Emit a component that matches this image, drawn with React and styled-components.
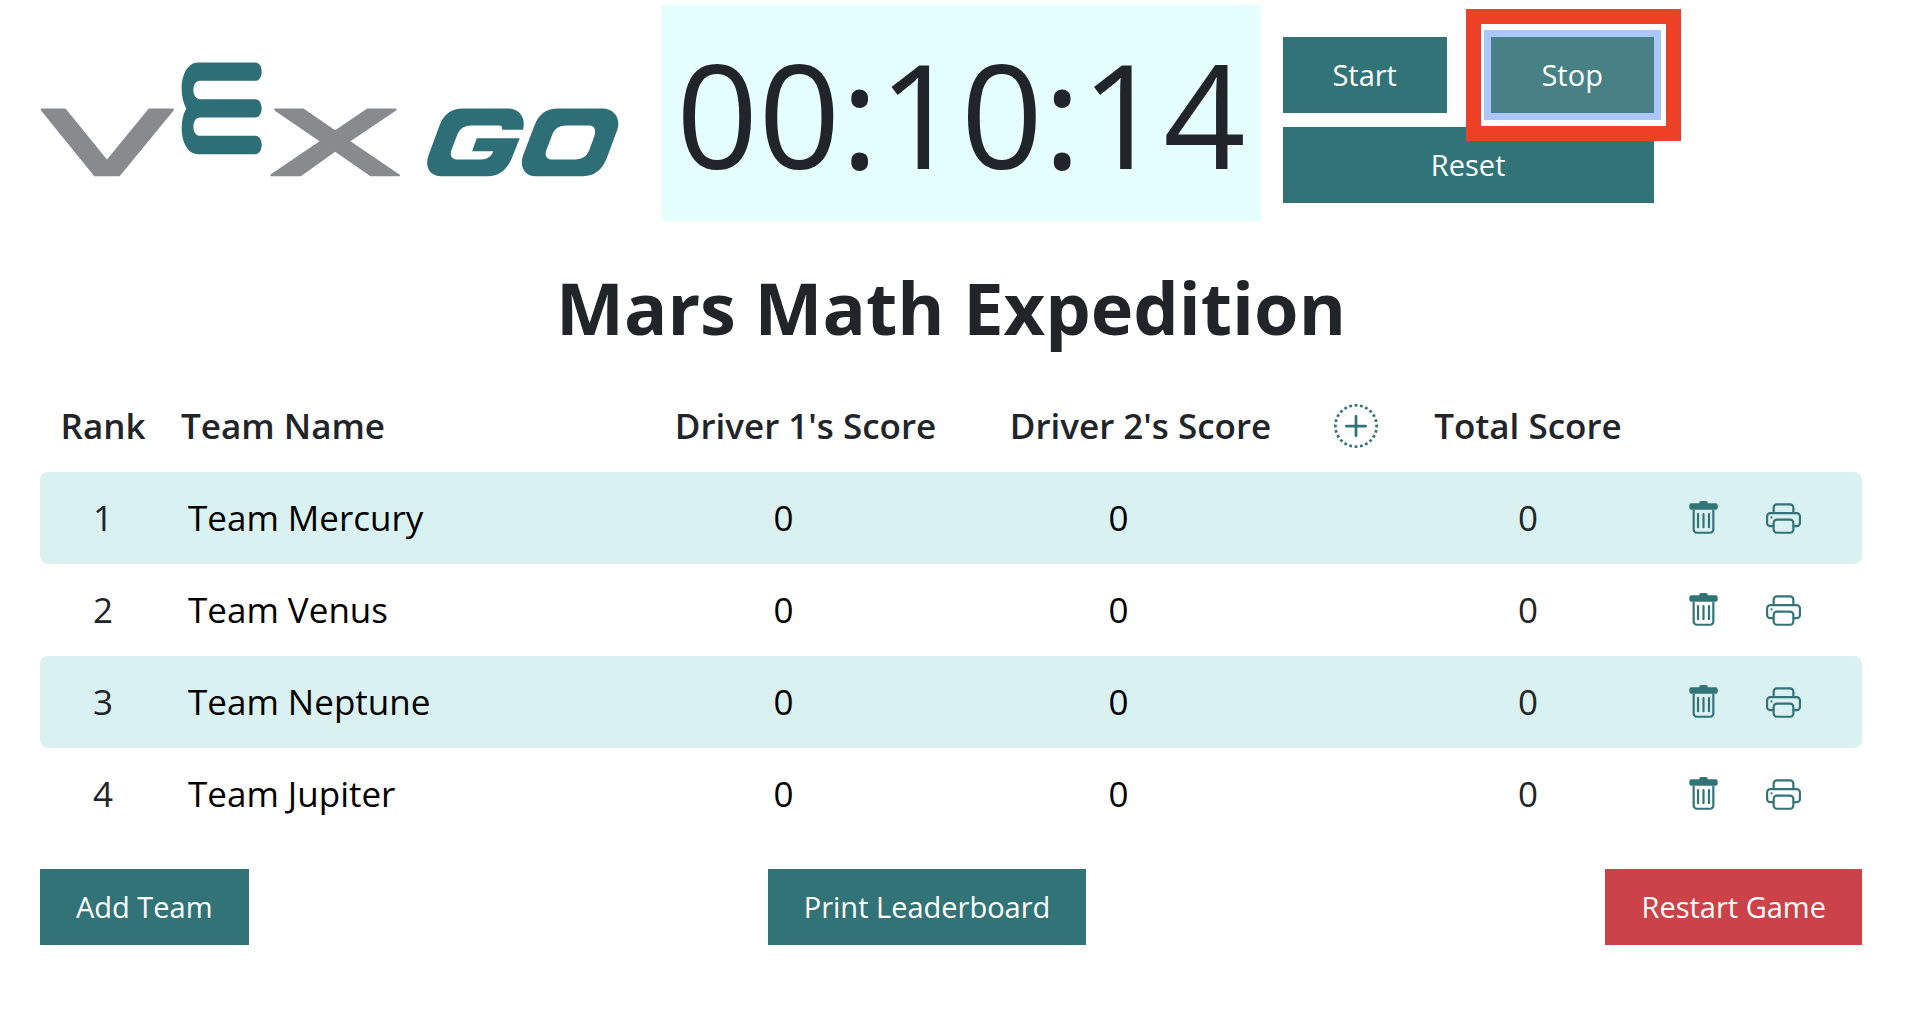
import React, { useState } from "react"
import styled, { createGlobalStyle } from "styled-components"
import { BsPlusCircleDotted, BsPrinter } from "react-icons/bs"

const GlobalStyle = createGlobalStyle`
  * {
    box-sizing: border-box;
  }

  body {
    margin: 0;
    background: #fff;
    color: #212529;
    font-family: "Open Sans", "Noto Sans", sans-serif;
  }
`

const Page = styled.main`
  padding: 5px 62px 40px 40px;
`

const Header = styled.header`
  display: flex;
  align-items: center;
`

const Logo = styled.svg`
  display: block;
  flex: none;
  width: 579px;
  height: 115px;
  margin-right: 43px;
  margin-top: 12px;
`

const Timer = styled.div`
  flex: none;
  padding: 0 15px 0 14px;
  margin-right: 22px;
  background: #e5ffff;
  font-size: 144px;
  line-height: 216px;
`

const Controls = styled.div`
  display: grid;
  grid-template-columns: 164px 163px;
  gap: 14px 44px;
  margin-top: 14px;
`

const Button = styled.button`
  width: 100%;
  padding: 17px 36px;
  border: 0;
  background: ${props => (props.$danger ? "#cb4249" : "#327378")};
  color: #fff;
  font-family: inherit;
  font-size: 29px;
  line-height: 42px;
  white-space: nowrap;
  cursor: pointer;
`

const ResetButton = styled(Button)`
  grid-column: 1 / -1;
`

const StopButton = styled(Button)`
  background: #488185;
  box-shadow: 0 0 0 7px #abc6fb;
`

const StopArea = styled.div`
  position: relative;
`

const Highlight = styled.span`
  position: absolute;
  inset: -28px -27px -28px -25px;
  border: 15px solid #ec4027;
  pointer-events: none;
`

const Title = styled.h1`
  margin: 32px 0 19px;
  font-size: 72px;
  font-weight: 700;
  line-height: 108px;
  text-align: center;
`

const Table = styled.table`
  width: 100%;
  table-layout: fixed;
  border-collapse: separate;
  border-spacing: 0;
  font-size: 35px;
  line-height: 52px;
`

const Col = styled.col`
  width: ${props => props.$width}px;
`

const HeadCell = styled.th`
  height: 92px;
  padding: ${props => (props.$left ? "0 0 0 15px" : "0")};
  font-weight: 600;
  text-align: ${props => (props.$left ? "left" : "center")};
  white-space: nowrap;
`

const Row = styled.tr`
  &:nth-child(odd) td {
    background: #d9f1f0;
  }
`

const Cell = styled.td`
  height: 92px;
  padding: 0;
  text-align: center;

  &:first-child {
    border-radius: 8px 0 0 8px;
  }

  &:last-child {
    border-radius: 0 8px 8px 0;
  }
`

const Field = styled.input`
  display: block;
  width: 100%;
  border: 0;
  background: transparent;
  color: #000;
  font: inherit;
`

const NameField = styled(Field)`
  padding: 0 0 0 22px;
`

const ScoreField = styled(Field)`
  padding: 0 44px 0 0;
  text-align: center;
`

const Actions = styled.div`
  display: flex;
  padding-left: 11px;
`

const IconButton = styled.button`
  display: flex;
  justify-content: center;
  align-items: center;
  width: ${props => (props.$wide ? "80px" : "100%")};
  padding: 0;
  border: 0;
  background: transparent;
  color: #327378;
  cursor: pointer;
`

const Footer = styled.footer`
  display: flex;
  justify-content: space-between;
  margin-top: 29px;

  ${Button} {
    width: auto;
  }
`

const VexGoLogo = () => (
  <Logo viewBox="30 38 1738 344" role="img" aria-label="VEX GO">
    <g fill="#898a8e">
      <path d="M36 177H104Q107 177 109 180L231 330 354 180Q356 177 360 177H428Q434 177 431 183L269 380H193L33 183Q30 177 36 177Z" />
      <path d="M736 177H821L916 242 1012 177H1097Q1103 178 1099 183L962 275 1109 375Q1113 380 1108 380H1022L916 307 813 380H725Q719 379 723 374L869 275 735 184Q730 178 736 177Z" />
    </g>
    <g fill="#2e6e76" fillRule="evenodd">
      <path d="M505 39H676C702 39 702 94 676 94H510C484 94 484 149 510 149H676C702 149 702 204 676 204H510C484 204 484 259 510 259H676C702 259 702 314 676 314H505C455 314 442 225 469 177C442 128 455 39 505 39Z" />
      <path d="M1300 177H1435C1470 177 1489 205 1480 241H1417V234Q1417 228 1410 228H1325Q1295 228 1284 252L1266 299C1258 318 1266 330 1284 330H1355Q1381 330 1391 305H1327L1341 266H1470L1447 324Q1425 380 1374 380H1235C1200 380 1184 352 1196 318L1230 226Q1249 177 1300 177Z" />
      <path d="M1585 177H1718C1754 177 1774 207 1763 241L1732 324Q1711 380 1660 380H1518C1483 380 1469 350 1480 318L1515 226Q1534 177 1585 177ZM1610 228Q1579 228 1569 252L1551 299C1543 318 1551 330 1569 330H1638Q1667 330 1678 304L1694 260C1700 240 1694 228 1678 228Z" />
    </g>
  </Logo>
)

const TrashIcon = () => (
  <svg width="35" height="35" viewBox="0 0 16 16" fill="currentColor">
    <path d="M6 1a1 1 0 0 1 1-1h2a1 1 0 0 1 1 1h3.500a1 1 0 0 1 1 1v1a1 1 0 0 1-1 1h-11a1 1 0 0 1-1-1V2a1 1 0 0 1 1-1z" />
    <path
      d="M3.500 4v9a1.500 1.500 0 0 0 1.500 1.500h6a1.500 1.500 0 0 0 1.500-1.500V4"
      fill="none"
      stroke="currentColor"
    />
    <path
      d="M5.500 6v6M8 6v6M10.500 6v6"
      stroke="currentColor"
      strokeLinecap="round"
    />
  </svg>
)

const initialTeams = [
  { name: "Team Mercury", scores: [0, 0] },
  { name: "Team Venus", scores: [0, 0] },
  { name: "Team Neptune", scores: [0, 0] },
  { name: "Team Jupiter", scores: [0, 0] },
]

export default function App() {
  const [teams, setTeams] = useState(initialTeams)

  const updateTeam = (index, changes) =>
    setTeams(teams.map((team, i) => (i === index ? { ...team, ...changes } : team)))

  const updateScore = (index, driver, value) => {
    const scores = teams[index].scores.map((score, i) =>
      i === driver ? Number(value) || 0 : score
    )
    updateTeam(index, { scores })
  }

  return (
    <Page>
      <GlobalStyle />
      <Header>
        <VexGoLogo />
        <Timer role="timer">00:10:14</Timer>
        <Controls>
          <Button type="button">Start</Button>
          <StopArea>
            <StopButton type="button">Stop</StopButton>
            <Highlight />
          </StopArea>
          <ResetButton type="button">Reset</ResetButton>
        </Controls>
      </Header>

      <Title>Mars Math Expedition</Title>

      <Table>
        <colgroup>
          <Col $width={126} />
          <col />
          <Col $width={335} />
          <Col $width={335} />
          <Col $width={96} />
          <Col $width={248} />
          <Col $width={210} />
        </colgroup>
        <thead>
          <tr>
            <HeadCell scope="col">Rank</HeadCell>
            <HeadCell scope="col" $left>
              Team Name
            </HeadCell>
            <HeadCell scope="col">Driver 1's Score</HeadCell>
            <HeadCell scope="col">Driver 2's Score</HeadCell>
            <HeadCell as="td">
              <IconButton type="button" aria-label="Add driver">
                <BsPlusCircleDotted size={44} />
              </IconButton>
            </HeadCell>
            <HeadCell scope="col">Total Score</HeadCell>
            <HeadCell as="td" />
          </tr>
        </thead>
        <tbody>
          {teams.map((team, index) => (
            <Row key={index}>
              <Cell>{index + 1}</Cell>
              <Cell>
                <NameField
                  aria-label={`Team ${index + 1} name`}
                  value={team.name}
                  onChange={e => updateTeam(index, { name: e.target.value })}
                />
              </Cell>
              {team.scores.map((score, driver) => (
                <Cell key={driver}>
                  <ScoreField
                    inputMode="numeric"
                    aria-label={`${team.name} driver ${driver + 1} score`}
                    value={score}
                    onChange={e => updateScore(index, driver, e.target.value)}
                  />
                </Cell>
              ))}
              <Cell />
              <Cell>{team.scores.reduce((sum, score) => sum + score, 0)}</Cell>
              <Cell>
                <Actions>
                  <IconButton
                    $wide
                    type="button"
                    aria-label={`Delete ${team.name}`}
                    onClick={() => setTeams(teams.filter((_, i) => i !== index))}
                  >
                    <TrashIcon />
                  </IconButton>
                  <IconButton $wide type="button" aria-label={`Print ${team.name}`}>
                    <BsPrinter size={35} />
                  </IconButton>
                </Actions>
              </Cell>
            </Row>
          ))}
        </tbody>
      </Table>

      <Footer>
        <Button type="button">Add Team</Button>
        <Button type="button">Print Leaderboard</Button>
        <Button type="button" $danger>
          Restart Game
        </Button>
      </Footer>
    </Page>
  )
}
